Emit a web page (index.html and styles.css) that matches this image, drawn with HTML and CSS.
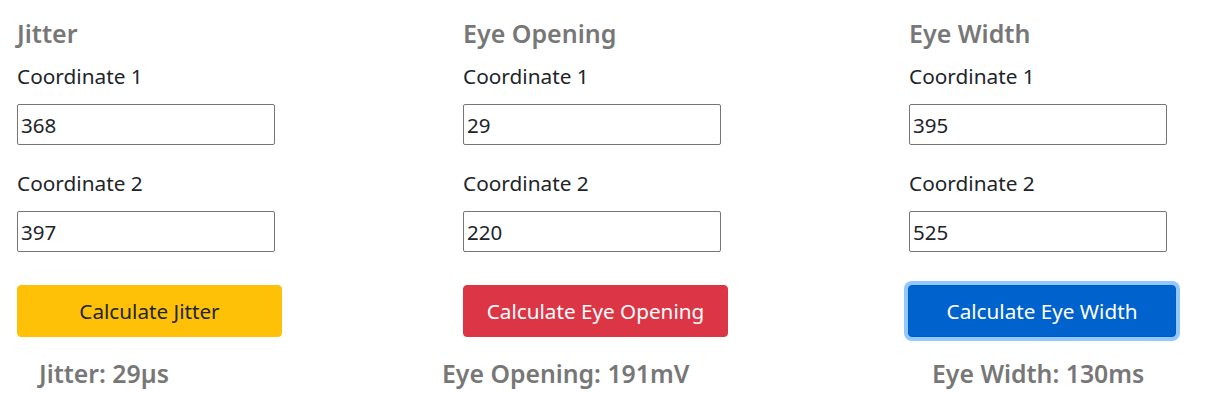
FILE: index.html
```html
<!DOCTYPE html>
<html>
<head>
<meta charset="utf-8">
<link rel="stylesheet" href="styles.css">
</head>
<body>
<div class="grid">
  <section class="col">
    <h2 class="title">Jitter</h2>
    <label class="label">Coordinate 1</label>
    <input class="field" type="text" value="368">
    <label class="label">Coordinate 2</label>
    <input class="field" type="text" value="397">
    <button class="btn btn-warning">Calculate Jitter</button>
    <div class="result result-jitter">Jitter: 29µs</div>
  </section>
  <section class="col">
    <h2 class="title">Eye Opening</h2>
    <label class="label">Coordinate 1</label>
    <input class="field" type="text" value="29">
    <label class="label">Coordinate 2</label>
    <input class="field" type="text" value="220">
    <button class="btn btn-danger">Calculate Eye Opening</button>
    <div class="result result-opening">Eye Opening: 191mV</div>
  </section>
  <section class="col">
    <h2 class="title">Eye Width</h2>
    <label class="label">Coordinate 1</label>
    <input class="field" type="text" value="395">
    <label class="label">Coordinate 2</label>
    <input class="field" type="text" value="525">
    <button class="btn btn-primary btn-focus">Calculate Eye Width</button>
    <div class="result result-width">Eye Width: 130ms</div>
  </section>
</div>
</body>
</html>
```
FILE: styles.css
```css
* { box-sizing: border-box; }
html, body { margin: 0; padding: 0; background: #fff; }
body {
  font-family: "Noto Sans", "Open Sans", sans-serif;
  color: #212529;
}
.grid {
  display: grid;
  grid-template-columns: 446px 446px 1fr;
  padding: 0 0 0 17px;
}
.col {
  display: flex;
  flex-direction: column;
  align-items: flex-start;
}
.title {
  margin: 16px 0 0 0;
  font-size: 25px;
  line-height: 34px;
  font-weight: 600;
  color: #777;
}
.label {
  display: block;
  font-size: 20.8px;
  line-height: 28px;
  margin-top: 12px;
}
.field {
  margin-top: 14px;
  width: 258px;
  height: 41px;
  border: 1px solid #767676;
  border-radius: 2px;
  padding: 0 3px;
  font-family: inherit;
  font-size: 20.5px;
  color: #212529;
  outline: none;
}
.field + .label { margin-top: 24px; }
.btn {
  margin-top: 33px;
  width: 265px;
  height: 52px;
  border: 1px solid transparent;
  border-radius: 4px;
  font-family: inherit;
  font-size: 20.7px;
  padding: 0;
  cursor: pointer;
}
.btn-warning { background: #ffc107; border-color: #ffc107; color: #212529; }
.btn-danger { background: #dc3545; border-color: #dc3545; color: #fff; }
.btn-primary { background: #0062cc; border-color: #005cbf; color: #fff; width: 268px; margin-left: -1px; }
.btn-focus { box-shadow: 0 0 0 4px rgba(38, 143, 255, 0.5); }
.result {
  margin-top: 19px;
  font-size: 24.8px;
  line-height: 34px;
  font-weight: 600;
  color: #777;
}
.result-jitter { margin-left: 22px; }
.result-opening { margin-left: -21px; }
.result-width { margin-left: 23px; }
```
